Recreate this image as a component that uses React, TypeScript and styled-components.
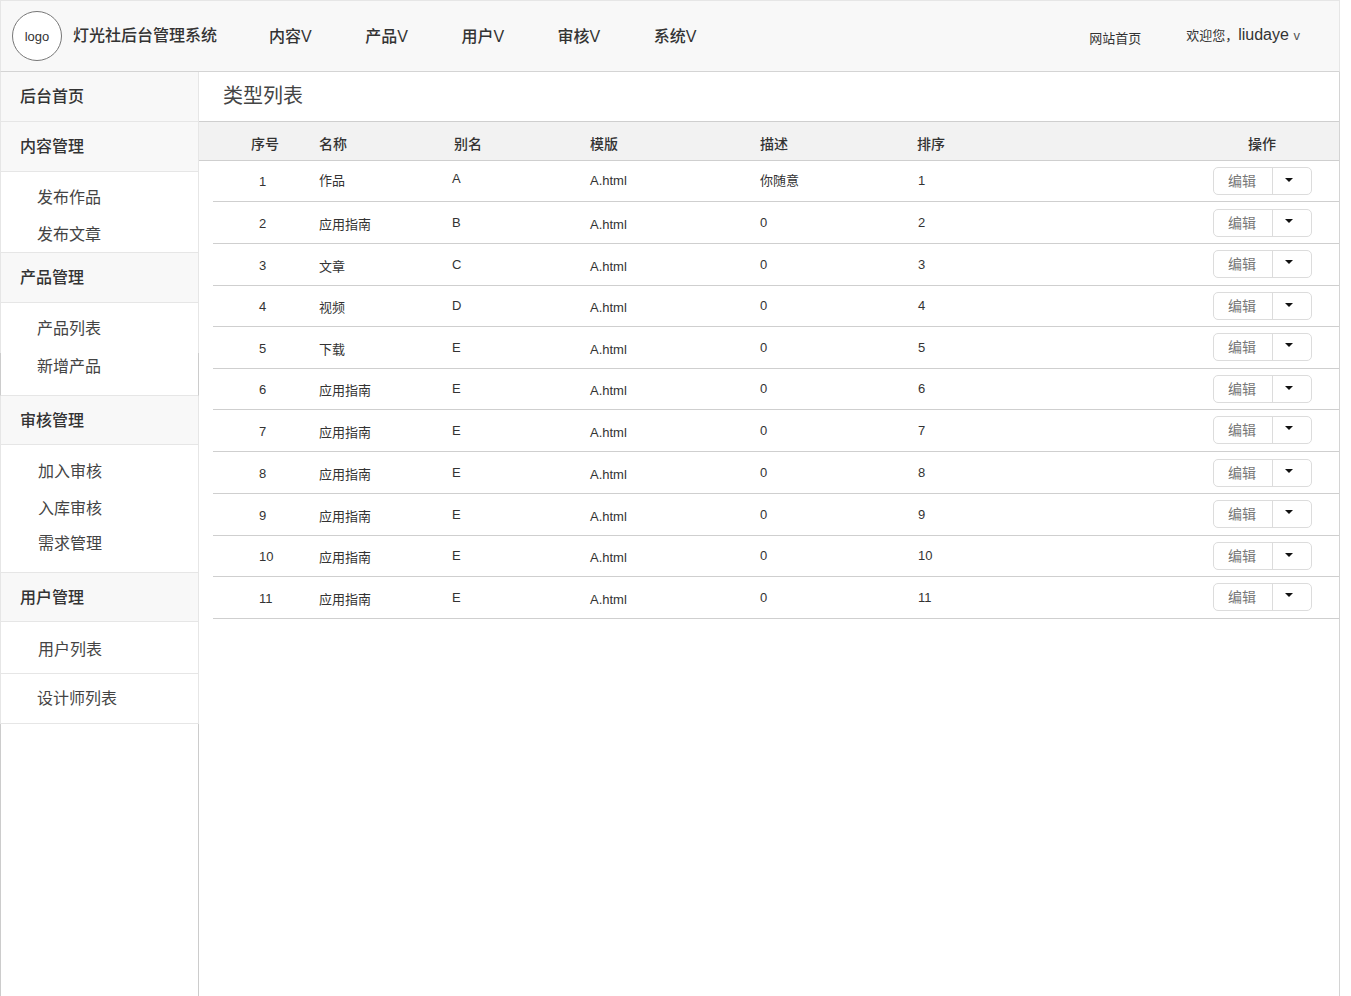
import React from "react";
import styled, { createGlobalStyle } from "styled-components";

const GlobalStyle = createGlobalStyle`
    html, body {
        margin: 0;
        padding: 0;
        background: #ffffff;
    }
    body {
        font-family: "Liberation Sans", "Noto Sans CJK SC", sans-serif;
        color: #333333;
    }
`;

const navItems = ["内容", "产品", "用户", "审核", "系统"];

interface rowType {
    id: number
    name: string
    alias: string
    desc: string
    height: number
}

const rows: rowType[] = [
    { id: 1, name: "作品", alias: "A", desc: "你随意", height: 41 },
    { id: 2, name: "应用指南", alias: "B", desc: "0", height: 42 },
    { id: 3, name: "文章", alias: "C", desc: "0", height: 42 },
    { id: 4, name: "视频", alias: "D", desc: "0", height: 41 },
    { id: 5, name: "下载", alias: "E", desc: "0", height: 42 },
    { id: 6, name: "应用指南", alias: "E", desc: "0", height: 41 },
    { id: 7, name: "应用指南", alias: "E", desc: "0", height: 42 },
    { id: 8, name: "应用指南", alias: "E", desc: "0", height: 42 },
    { id: 9, name: "应用指南", alias: "E", desc: "0", height: 42 },
    { id: 10, name: "应用指南", alias: "E", desc: "0", height: 41 },
    { id: 11, name: "应用指南", alias: "E", desc: "0", height: 42 },
];

const App = () => {
    return <Page>
        <GlobalStyle />
        <Header>
            <LogoCircle>logo</LogoCircle>
            <Brand>灯光社后台管理系统</Brand>
            <Nav>
                {navItems.map((n) => <NavItem key={n}>{n}V</NavItem>)}
            </Nav>
            <HomeLink>网站首页</HomeLink>
            <Welcome>欢迎您，<UserName>liudaye</UserName> <small>v</small></Welcome>
        </Header>
        <Body>
            <Sidebar>
                <SideHead $h={50}>后台首页</SideHead>
                <SideHead $h={50}>内容管理</SideHead>
                <SideGroup $h={81}>
                    <SideItem $top={14}>发布作品</SideItem>
                    <SideItem $top={13}>发布文章</SideItem>
                </SideGroup>
                <SideHead $h={50}>产品管理</SideHead>
                <SideGroup $h={50} $noLine>
                    <SideItem $top={14}>产品列表</SideItem>
                </SideGroup>
                <SideGroup $h={43} $dark>
                    <SideItem $top={2}>新增产品</SideItem>
                </SideGroup>
                <SideHead $h={49}>审核管理</SideHead>
                <SideGroup $h={128}>
                    <SideItem $top={15} $x={1}>加入审核</SideItem>
                    <SideItem $top={13} $x={1}>入库审核</SideItem>
                    <SideItem $top={11} $x={1}>需求管理</SideItem>
                </SideGroup>
                <SideHead $h={49}>用户管理</SideHead>
                <SideGroup $h={52}>
                    <SideItem $top={16} $x={1}>用户列表</SideItem>
                </SideGroup>
                <SideGroup $h={50}>
                    <SideItem $top={13}>设计师列表</SideItem>
                </SideGroup>
                <SideFill />
            </Sidebar>
            <Main>
                <Title>类型列表</Title>
                <TableHead>
                    <HeadCell $x={52}>序号</HeadCell>
                    <HeadCell $x={120}>名称</HeadCell>
                    <HeadCell $x={255}>别名</HeadCell>
                    <HeadCell $x={391}>模版</HeadCell>
                    <HeadCell $x={561}>描述</HeadCell>
                    <HeadCell $x={718}>排序</HeadCell>
                    <HeadCell $x={1049}>操作</HeadCell>
                </TableHead>
                {rows.map((r) => {
                    const first = r.id === 1
                    const tall = r.height === 42 ? 1 : 0
                    return <Row key={r.id} $h={r.height}>
                        <NumCell $dy={tall}>{r.id}</NumCell>
                        <Cell $dy={first ? -2 : tall}>{r.name}</Cell>
                        <Cell $dy={first ? -3 : tall - 1}>{r.alias}</Cell>
                        <Cell $dy={first ? -1 : tall + 1}>A.html</Cell>
                        <Cell $dy={first ? -2 : tall - 1}>{r.desc}</Cell>
                        <Cell $dy={tall - 1}>{r.id}</Cell>
                        <ActionCell $raised={!first && r.id % 2 === 1 && tall === 1}>
                            <SplitButton>
                                <EditPart>编辑</EditPart>
                                <CaretPart><Caret /></CaretPart>
                            </SplitButton>
                        </ActionCell>
                    </Row>
                })}
            </Main>
        </Body>
    </Page>
}

export default App;

const Page = styled.div`
    width: 1340px;
    height: 996px;
    display: flex;
    flex-direction: column;
    overflow: hidden;
`;

const Header = styled.header`
    box-sizing: border-box;
    height: 72px;
    display: flex;
    align-items: center;
    padding: 0 0 0 11px;
    background: #f8f8f8;
    border-top: 1px solid #e6e6e6;
    border-left: 1px solid #e6e6e6;
    border-right: 1px solid #e6e6e6;
    border-bottom: 1px solid #d4d4d4;
`;

const LogoCircle = styled.div`
    box-sizing: border-box;
    flex: none;
    width: 50px;
    height: 50px;
    border: 1px solid #777777;
    border-radius: 50%;
    background: #ffffff;
    display: flex;
    align-items: center;
    justify-content: center;
    font-size: 13px;
    color: #333333;
`;

const Brand = styled.div`
    margin-left: 11px;
    margin-bottom: 4px;
    width: 144px;
    white-space: nowrap;
    font-size: 16px;
    font-weight: 500;
    color: #333333;
`;

const Nav = styled.nav`
    display: flex;
    margin-left: 52px;
    margin-bottom: 2px;
    gap: 52.2px;
`;

const NavItem = styled.div`
    width: 44px;
    white-space: nowrap;
    font-size: 16px;
    font-weight: 500;
    color: #333333;
`;

const HomeLink = styled.div`
    margin-left: auto;
    margin-top: 2px;
    font-size: 13px;
    color: #333333;
`;

const Welcome = styled.div`
    margin-left: 45px;
    margin-right: 39px;
    margin-bottom: 4px;
    font-size: 13px;
    color: #333333;
    white-space: nowrap;
    small {
        margin-left: 1px;
        font-size: 13px;
        color: #555555;
    }
`;

const UserName = styled.span`
    font-size: 16px;
`;

const Body = styled.div`
    flex: 1;
    display: flex;
    min-height: 0;
`;

const Sidebar = styled.aside`
    flex: none;
    width: 199px;
    display: flex;
    flex-direction: column;
`;

const SideHead = styled.div<{ $h: number }>`
    box-sizing: border-box;
    flex: none;
    height: ${props => props.$h}px;
    display: flex;
    align-items: center;
    padding: 0 0 ${props => props.$h === 49 ? 2 : 4}px 19px;
    background: #f8f8f8;
    border: 1px solid #e6e6e6;
    border-top: none;
    font-size: 16px;
    font-weight: 500;
    color: #333333;
`;

const SideGroup = styled.div<{ $h: number, $dark?: boolean, $noLine?: boolean }>`
    box-sizing: border-box;
    flex: none;
    display: flow-root;
    height: ${props => props.$h}px;
    border-left: 1px solid ${props => props.$dark ? "#cccccc" : "#e6e6e6"};
    border-right: 1px solid ${props => props.$dark ? "#cccccc" : "#e6e6e6"};
    border-bottom: ${props => props.$noLine ? "none" : "1px solid #e6e6e6"};
    background: #ffffff;
`;

const SideFill = styled.div`
    flex: 1;
    border-left: 1px solid #cccccc;
    border-right: 1px solid #cccccc;
`;

const SideItem = styled.div<{ $top: number, $x?: number }>`
    height: 24px;
    line-height: 24px;
    margin-top: ${props => props.$top}px;
    padding-left: ${props => 36 + (props.$x || 0)}px;
    font-size: 16px;
    color: #444444;
`;

const Main = styled.main`
    flex: 1;
    min-width: 0;
    border-right: 1px solid #d4d4d4;
`;

const Title = styled.div`
    box-sizing: border-box;
    height: 49px;
    padding: 10px 0 0 24px;
    font-size: 20px;
    line-height: 28px;
    color: #444444;
`;

const TableHead = styled.div`
    box-sizing: border-box;
    height: 40px;
    position: relative;
    background: #f2f2f2;
    border-top: 1px solid #cfcfcf;
    border-bottom: 1px solid #cfcfcf;
`;

const HeadCell = styled.span<{ $x: number }>`
    position: absolute;
    left: ${props => props.$x}px;
    top: 12px;
    font-size: 14px;
    line-height: 20px;
    font-weight: 500;
    color: #333333;
`;

const Row = styled.div<{ $h: number }>`
    box-sizing: border-box;
    height: ${props => props.$h}px;
    margin-left: 14px;
    display: grid;
    grid-template-columns: 106px 133px 138px 170px 158px 295px 1fr;
    align-items: center;
    border-bottom: 1px solid #cfcfcf;
    font-size: 13px;
    color: #333333;
`;

const Cell = styled.div<{ $dy?: number }>`
    white-space: nowrap;
    margin-top: ${props => (props.$dy || 0) * 2}px;
`;

const NumCell = styled(Cell)`
    padding-left: 46px;
`;

const ActionCell = styled.div<{ $raised?: boolean }>`
    display: flex;
    margin-top: ${props => props.$raised ? "-2px" : "0"};
`;

const SplitButton = styled.div`
    box-sizing: border-box;
    width: 99px;
    height: 28px;
    display: flex;
    background: #ffffff;
    border: 1px solid #dcdcdc;
    border-radius: 5px;
`;

const EditPart = styled.div`
    width: 59px;
    padding-right: 2px;
    padding-bottom: 2px;
    box-sizing: border-box;
    display: flex;
    align-items: center;
    justify-content: center;
    font-size: 14px;
    color: #777777;
    border-right: 1px solid #dcdcdc;
`;

const CaretPart = styled.div`
    flex: 1;
    display: flex;
    align-items: center;
    justify-content: center;
    padding-right: 7px;
`;

const Caret = styled.span`
    width: 0;
    height: 0;
    margin-top: -3px;
    border-left: 4px solid transparent;
    border-right: 4px solid transparent;
    border-top: 4.5px solid #111111;
`;
